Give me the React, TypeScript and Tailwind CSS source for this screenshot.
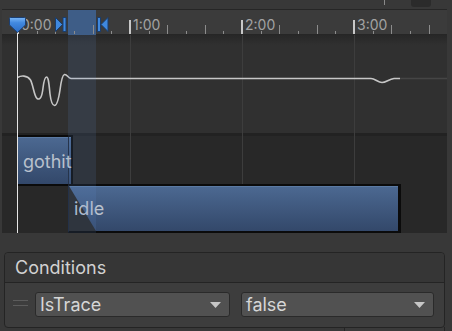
import React from "react";

const ORIGIN = 18; // abs x of 0:00
const PX_PER_MIN = 112;
const ticks = Array.from({ length: 23 }, (_, k) => k);
const labels = ["0:00", "1:00", "2:00", "3:00"];

function DropArrow() {
  return (
    <svg width="11" height="6" viewBox="0 0 11 6" className="shrink-0">
      <path d="M0 0 H11 L5.5 6 Z" fill="#c6c6c6" />
    </svg>
  );
}

function Dropdown({ label, width }: { label: string; width: string }) {
  return (
    <div
      className={`flex h-[25px] items-center justify-between rounded-[3px] border border-[#2a2a2a] bg-[#515151] pl-[4px] pr-[8px] text-[18px] leading-[23px] text-[#d6d6d6] ${width}`}
    >
      <span>{label}</span>
      <DropArrow />
    </div>
  );
}

export default function App() {
  return (
    <div className="relative h-[331px] w-[452px] overflow-hidden bg-[#383838] font-['Inter',sans-serif]">
      {/* top strip */}
      <div className="relative h-[9px]">
        <div className="absolute left-[384px] top-0 h-[5px] w-px bg-[#8a8a8a]" />
        <div className="absolute left-[411px] top-0 h-[7px] w-[20px] rounded-b-[3px] bg-[#2b2b2b]" />
      </div>

      {/* timeline */}
      <div className="relative ml-[2px] flex h-[224px] w-[445px] flex-col">
        <div className="h-[26px] border-y border-[#262626] bg-[#3b3b3b]" />
        <div className="h-[98px] bg-[#303030]">
          <div className="h-[10px] bg-linear-to-b from-[#272727] to-[#303030]" />
        </div>
        <div className="h-[100px] bg-[#282828]">
          <div className="h-[3px] bg-[#222222]" />
        </div>

        {/* ruler transition band */}
        <div className="absolute left-[66px] top-[1px] h-[25px] w-[28px] bg-[#3e5d87]" />

        {/* ruler ticks */}
        {ticks.map((k) => {
          const x = ORIGIN + (k * PX_PER_MIN) / 6;
          if (k % 6 === 0) {
            return (
              <div
                key={k}
                className="absolute top-[11px] h-[14px] w-[2px] bg-[#c8c8c8]"
                style={{ left: Math.round(x) - 1 - 2 }}
              />
            );
          }
          const tall = k % 2 === 0;
          return (
            <div
              key={k}
              className={`absolute w-px bg-[#8c8c8c] ${tall ? "top-[16px] h-[9px]" : "top-[22px] h-[3px]"}`}
              style={{ left: Math.round(x) - 2 }}
            />
          );
        })}

        {/* ruler labels */}
        {labels.map((t, i) => (
          <span
            key={t}
            className="absolute top-[9px] text-[14px] leading-[14px] text-[#a2a2a2]"
            style={{ left: Math.round(ORIGIN + i * PX_PER_MIN) + 3 - 2 }}
          >
            {t}
          </span>
        ))}

        {/* grid lines */}
        <div className="absolute left-[128px] top-[26px] h-[198px] w-px bg-[#3d3d3d]" />
        <div className="absolute left-[240px] top-[26px] h-[198px] w-px bg-[#3d3d3d]" />
        <div className="absolute left-[352px] top-[26px] h-[198px] w-px bg-[#3d3d3d]" />

        {/* curve */}
        <svg
          className="absolute left-0 top-0"
          width="445"
          height="224"
          viewBox="2 9 445 224"
          fill="none"
        >
          <path d="M400 78.5 H447" stroke="#454545" strokeWidth="1.5" />
          <path
            d="M17.5 77.5 C21 75.5 27 75 30.5 80 C33 84 34 96 37 98.5 C40 100.5 42 97 43 88 C44 80 45 77 46.5 77 C48.5 77 49 84 50 94 C51 102 52.5 105.5 54.5 105.5 C57 105.5 58.5 100 60 90 C61 82 62 75 64.5 74.5 C67 74 68 78 71 78.5 L371 78.5 C375 78.5 378 82.5 382 82.5 C386 82.5 389 79 394 78.5 L400 78.5"
            stroke="#c6c6c6"
            strokeWidth="1.6"
          />
        </svg>

        {/* gothit clip */}
        <div className="absolute left-[15px] top-[126px] h-[51px] w-[56px] border-y-2 border-r-2 border-[#0b0b0b] bg-linear-to-b from-[#4c6992] to-[#33486a] shadow-[inset_0_1px_0_#5b7aa3]">
          <div className="absolute left-[51px] top-0 h-full w-px bg-[#1d2636]" />
          <span className="absolute left-[6px] top-[16px] text-[18px] leading-[18px] text-[#b9c1cd]">
            gothit
          </span>
        </div>

        {/* idle clip */}
        <div className="absolute left-[66px] top-[175px] h-[49px] w-[333px] border-y-2 border-l border-r-[3px] border-[#0b0b0b] border-l-[#1b2333] bg-linear-to-b from-[#4c6992] to-[#33486a] shadow-[inset_0_1px_0_#5b7aa3]">
          <svg className="absolute left-0 top-0" width="28" height="45" viewBox="0 0 28 45">
            <polygon points="0,0 0,45 27,45" fill="#282828" />
          </svg>
          <span className="absolute left-[5px] top-[14px] text-[18px] leading-[18px] text-[#b9c1cd]">
            idle
          </span>
        </div>

        {/* transition band overlay */}
        <div className="absolute left-[66px] top-[26px] h-[198px] w-[28px] bg-[rgba(100,150,220,0.13)]" />

        {/* playhead line */}
        <div className="absolute left-[15px] top-[23px] h-[201px] w-px bg-[#e6e6e6]" />

        {/* markers */}
        <svg
          className="absolute left-0 top-0"
          width="445"
          height="30"
          viewBox="2 9 445 30"
        >
          <defs>
            <linearGradient id="ph" x1="0" y1="0" x2="0" y2="1">
              <stop offset="0" stopColor="#7ab6f6" />
              <stop offset="0.35" stopColor="#4289e0" />
              <stop offset="1" stopColor="#2b6cc4" />
            </linearGradient>
          </defs>
          <path
            d="M9.5 18.5 Q9.5 17.5 10.5 17.5 H24.5 Q25.5 17.5 25.5 18.5 V25 L17.5 32.5 L9.5 25 Z"
            fill="url(#ph)"
            stroke="#1b3f73"
          />
          <polygon points="55.5,17.5 62.5,24.5 55.5,31.5" fill="#3f88de" stroke="#1a3d6c" />
          <rect x="63" y="17.5" width="3" height="14" fill="#3f88de" stroke="#1a3d6c" />
          <rect x="97.5" y="17.5" width="3" height="14" fill="#3f88de" stroke="#1a3d6c" />
          <polygon points="108,17.5 101,24.5 108,31.5" fill="#3f88de" stroke="#1a3d6c" />
        </svg>
      </div>

      {/* Conditions */}
      <div className="relative ml-[4px] mt-[19px] w-[441px] rounded-[4px] border border-[#242424] bg-[#3d3d3d]">
        <div className="flex h-[30px] items-center rounded-t-[4px] border-b border-[#242424] bg-[#363636] pl-[10px] text-[18px] leading-[29px] text-[#d2d2d2]">
          Conditions
        </div>
        <div className="flex h-[44px] items-start pl-[8px] pt-[9px]">
          <div className="mt-[8px] flex h-[6px] w-[15px] flex-col justify-between">
            <div className="h-px bg-[#5c5c5c]" />
            <div className="h-px bg-[#5c5c5c]" />
          </div>
          <div className="ml-[7px]">
            <Dropdown label="IsTrace" width="w-[195px]" />
          </div>
          <div className="ml-[11px]">
            <Dropdown label="false" width="w-[193px]" />
          </div>
        </div>
      </div>
      <div className="-mt-[1px] ml-[344px] h-[10px] w-[101px] border-x border-b border-[#242424] bg-[#3a3a3a]" />
    </div>
  );
}
